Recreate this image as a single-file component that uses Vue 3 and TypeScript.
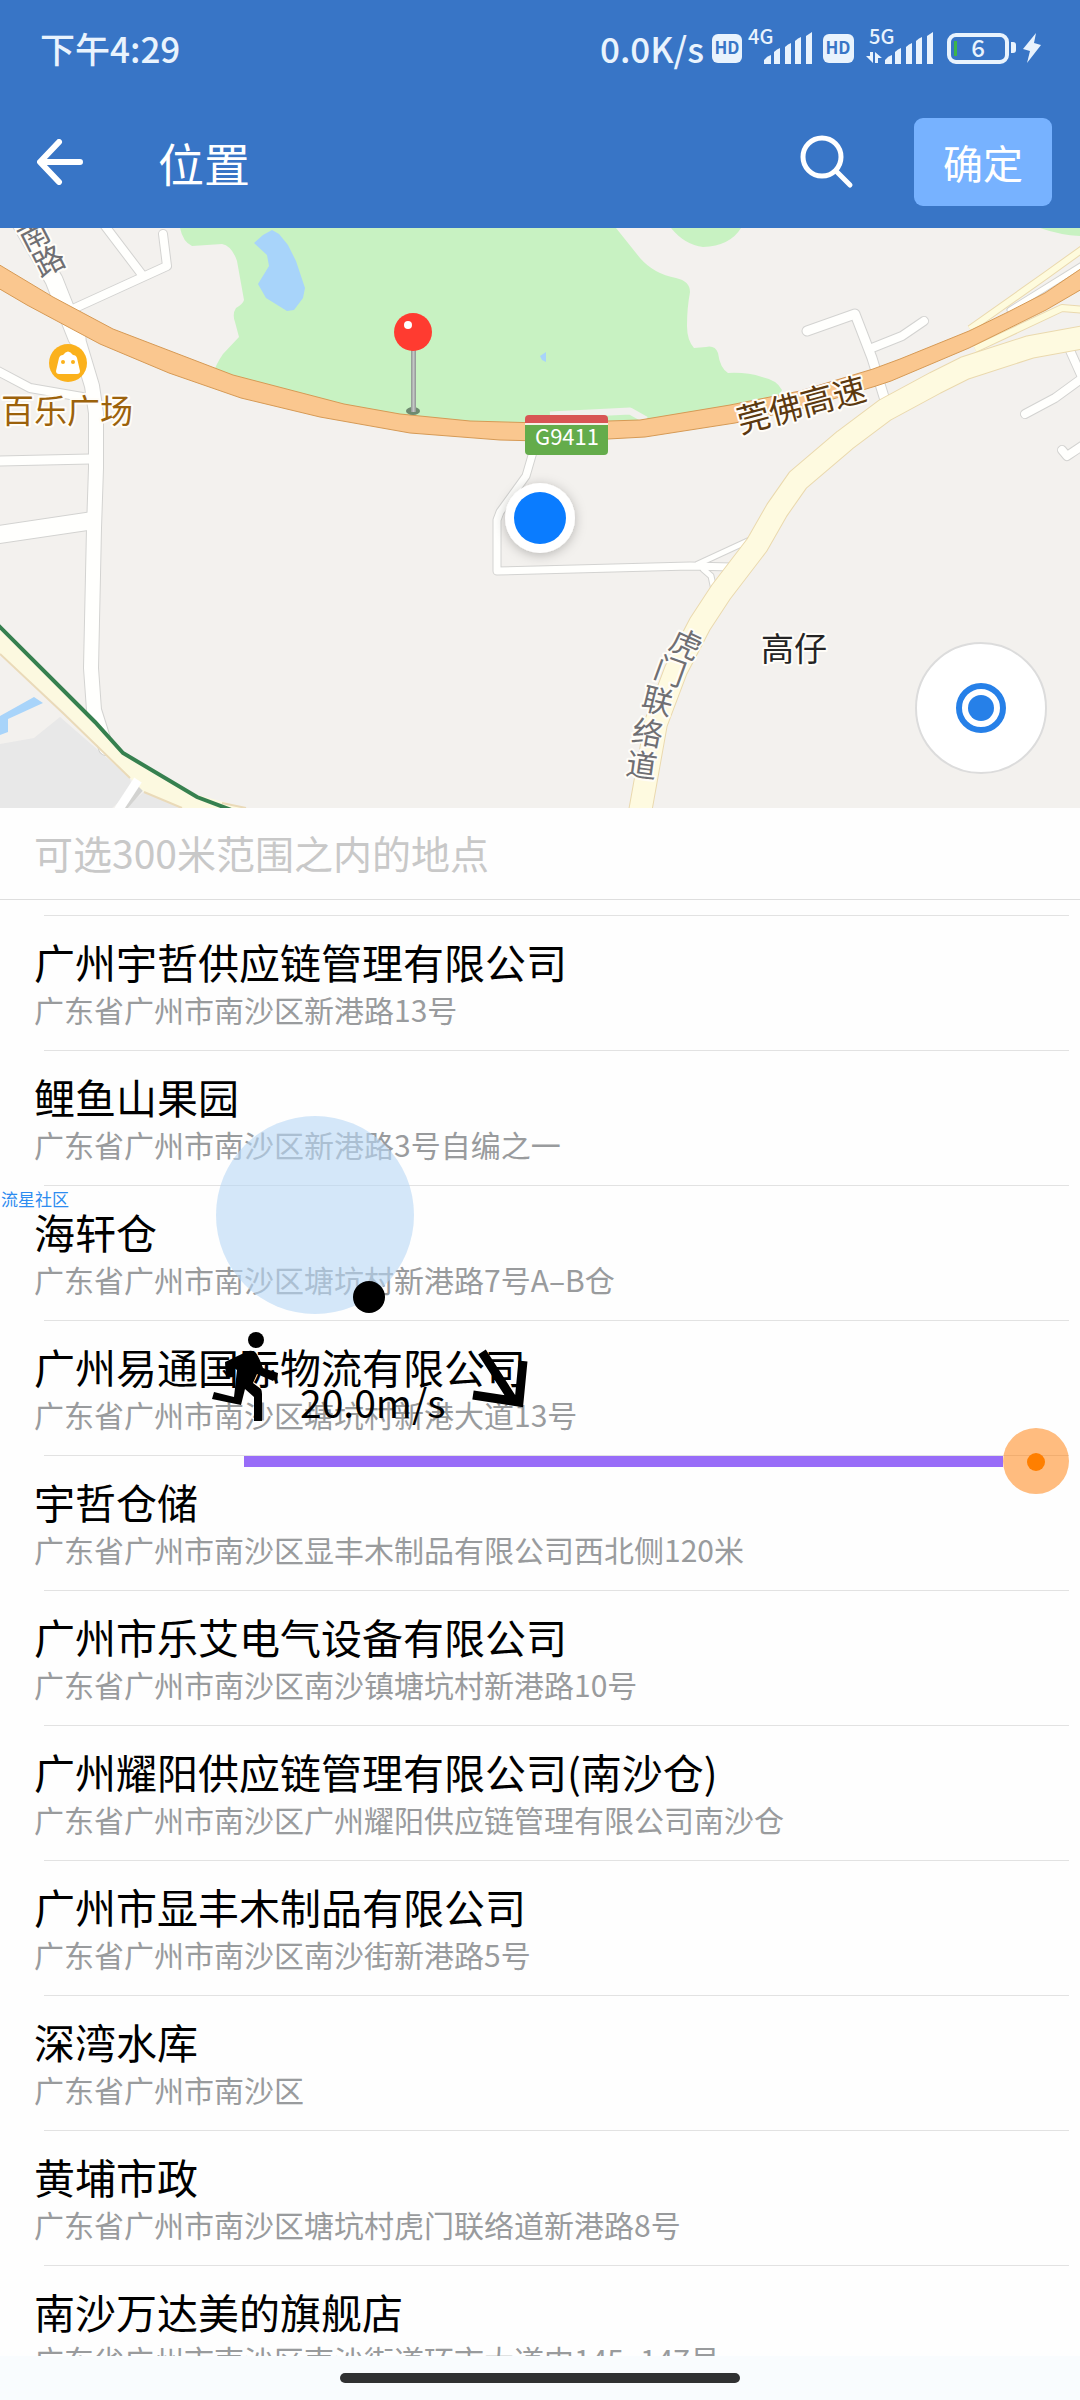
<script setup lang="ts">
interface Place {
  name: string
  address: string
}

interface Glyph {
  char: string
  x: number
  y: number
  turn: number
}

const places: Place[] = [
  { name: '广州宇哲供应链管理有限公司', address: '广东省广州市南沙区新港路13号' },
  { name: '鲤鱼山果园', address: '广东省广州市南沙区新港路3号自编之一' },
  { name: '海轩仓', address: '广东省广州市南沙区塘坑村新港路7号A–B仓' },
  { name: '广州易通国际物流有限公司', address: '广东省广州市南沙区塘坑村新港大道13号' },
  { name: '宇哲仓储', address: '广东省广州市南沙区显丰木制品有限公司西北侧120米' },
  { name: '广州市乐艾电气设备有限公司', address: '广东省广州市南沙区南沙镇塘坑村新港路10号' },
  { name: '广州耀阳供应链管理有限公司(南沙仓)', address: '广东省广州市南沙区广州耀阳供应链管理有限公司南沙仓' },
  { name: '广州市显丰木制品有限公司', address: '广东省广州市南沙区南沙街新港路5号' },
  { name: '深湾水库', address: '广东省广州市南沙区' },
  { name: '黄埔市政', address: '广东省广州市南沙区塘坑村虎门联络道新港路8号' },
  { name: '南沙万达美的旗舰店', address: '广东省广州市南沙区南沙街道环市大道中145–147号' },
]

// Road names that follow the bend of the road, one turned character at a time
const roadGlyphs: Glyph[] = [
  { char: '南', x: 33, y: 5, turn: -27 },
  { char: '路', x: 48, y: 31, turn: -27 },
  { char: '虎', x: 687, y: 414, turn: 25 },
  { char: '门', x: 671, y: 441, turn: 20 },
  { char: '联', x: 658, y: 471, turn: 14 },
  { char: '络', x: 648, y: 503, turn: 11 },
  { char: '道', x: 642, y: 535, turn: 8 },
]

// White lanes on the map, drawn twice: a grey casing and then the surface
const lanes: { d: string; w: number }[] = [
  { d: 'M15 -15 L54 52 L77 110', w: 17 },
  { d: 'M77 108 L92 158 L96 185 L96 240 L94 300 L91 440 L94 482 L106 520', w: 14 },
  { d: 'M-4 142 L30 160 L88 170', w: 8 },
  { d: 'M-4 233 L90 231', w: 9 },
  { d: 'M-4 307 L90 293', w: 17 },
  { d: 'M75 80 L167 38 L163 6', w: 8 },
  { d: 'M102 -6 L143 48', w: 8 },
  { d: 'M533 224 L526 248 L500 284 L497 292 L497 343 L690 338 L732 339', w: 7 },
  { d: 'M698 336 L750 312', w: 5 },
  { d: 'M703 341 L711 348 L714 362', w: 5 },
  { d: 'M807 103 L855 86 L872 130 L888 182', w: 9 },
  { d: 'M872 120 L902 108 L924 93', w: 8 },
  { d: 'M1068 118 L1086 158', w: 8 },
  { d: 'M1025 186 L1055 170 L1088 146', w: 8 },
  { d: 'M1062 222 L1067 228 L1088 214', w: 8 },
  { d: 'M1084 36 L1010 82', w: 5 },
]
</script>

<template>
  <div class="page">
    <header class="top">
      <div class="status">
        <span class="time">下午4:29</span>
        <span class="speed">0.0K/s</span>
        <svg class="status-icons" viewBox="0 0 330 40" width="330" height="40" aria-hidden="true">
          <g fill="#e9f3fd">
            <rect x="0" y="6" width="30" height="29" rx="6" />
            <rect x="111" y="6" width="31" height="29" rx="6" />
            <path d="M52 36v-4q3-4 7-5v9zM62 36v-12q3-3 6-4v16zM73 36v-17q3-3 6-4v21zM83 36v-23q3-3 6-4v27zM94 36v-28q3-2 6-4v32z" />
            <path d="M173 36v-4q3-4 7-5v9zM183 36v-12q3-3 6-4v16zM194 36v-17q3-3 6-4v21zM204 36v-23q3-3 6-4v27zM215 36v-28q3-2 6-4v32z" />
            <path d="M158 24h3v11l-7-7h4zM163 35v-11l7 6h-4v5z" />
            <path d="M299 14h2q3 0 3 3v5q0 3-3 3h-2z" />
            <path d="M324 5L311 21L318 23L315 35L329 17L322 15Z" />
            <text x="36" y="16" class="net">4G</text>
            <text x="157" y="16" class="net">5G</text>
            <text x="266" y="29" text-anchor="middle" class="level">6</text>
          </g>
          <text x="15" y="26" text-anchor="middle" class="hd">HD</text>
          <text x="126" y="26" text-anchor="middle" class="hd">HD</text>
          <rect x="237" y="7" width="58" height="27" rx="7" fill="none" stroke="#e9f3fd" stroke-width="4" />
          <rect x="242" y="13" width="3" height="15" fill="#3bb54a" />
        </svg>
      </div>
      <div class="bar">
        <button class="icon back" aria-label="返回">
          <svg viewBox="0 0 46 46" width="46" height="46">
            <path d="M43 23H4M22 3L3 23l19 20" fill="none" stroke="#fff" stroke-width="6" stroke-linecap="round" stroke-linejoin="round" />
          </svg>
        </button>
        <h1>位置</h1>
        <button class="icon search" aria-label="搜索">
          <svg viewBox="0 0 54 54" width="54" height="54">
            <circle cx="22" cy="22" r="19" fill="none" stroke="#fff" stroke-width="5" />
            <path d="M36 36L50 50" stroke="#fff" stroke-width="5" stroke-linecap="round" />
          </svg>
        </button>
        <button class="confirm">确定</button>
      </div>
    </header>

    <section class="map">
      <svg viewBox="0 0 1080 580" class="map-art" role="img" aria-label="地图">
        <defs>
          <filter id="glow" x="-50%" y="-50%" width="200%" height="200%">
            <feDropShadow dx="0" dy="2" stdDeviation="6" flood-color="#000" flood-opacity="0.25" />
          </filter>
          <linearGradient id="stem" x1="0" x2="1">
            <stop offset="0" stop-color="#8f9492" />
            <stop offset="0.5" stop-color="#c3c6c5" />
            <stop offset="1" stop-color="#8f9492" />
          </linearGradient>
        </defs>
        <rect width="1080" height="580" fill="#f3f1ee" />
        <g fill="#c8f2c2">
          <path d="M180 0 Q183 14 192 18 L222 16 Q232 18 237 33 L244 72 Q243 76 236 80 Q232 86 235 94 L239 109 L223 126 Q216 136 213 146 L340 182 L470 200 L640 196 L775 176 L782 162 Q777 152 762 149 Q747 144 728 145 Q720 140 718 125 Q715 117 706 119 L694 120 Q687 112 687 98 Q687 80 690 64 Q690 53 676 50 Q654 46 640 30 L616 0 Z" />
          <path d="M671 0 Q685 17 703 19 Q730 18 741 0 Z" />
          <path d="M1040 0 Q1060 7 1080 8 V0 Z" />
        </g>
        <g fill="#a8d4fa">
          <path d="M272 2 L263 7 L254 15 L267 27 L269 38 L258 56 L266 70 L287 83 L294 82 L303 70 L305 60 L296 33 L288 17 L279 6 Z" />
          <path d="M540 128 L546 124 V134 L542 132 Z" />
        </g>
        <path d="M0 516 L34 510 L60 489 L130 550 L132 562 L112 580 H0 Z M144 564 L182 580 H124 Z" fill="#e8e8e8" />
        <path d="M0 488 L34 469 L43 475 L8 491 V504 L0 507 Z" fill="#a8d4fa" />
        <g fill="none" stroke-linejoin="round">
          <path d="M550 187 L630 183 L646 192" stroke="#f1f0ed" stroke-width="7" />
          <g stroke="#d3d3d1" stroke-linecap="round">
            <path v-for="lane in lanes" :key="lane.d" :d="lane.d" :stroke-width="lane.w + 2" />
          </g>
          <g stroke="#fffffd" stroke-linecap="round">
            <path v-for="lane in lanes" :key="lane.d" :d="lane.d" :stroke-width="lane.w" />
          </g>
          <path d="M142 556 L116 586" stroke="#d3d3d1" stroke-width="10" />
          <path d="M1084 20 L1045 48 L970 101 M975 121 L1062 80 L1086 82" stroke="#ead9ae" stroke-width="8" />
          <path d="M1084 20 L1045 48 L970 101 M975 121 L1062 80 L1086 82" stroke="#fefbdd" stroke-width="6" />
          <path d="M1090 108 L1030 119 L965 140 L935 155 L885 182 L845 212 L798 252 L777 282 L757 317 L721 364 L700 396 L676 442 L656 495 L639 590" stroke="#ead9ae" stroke-width="24" />
          <path d="M1090 108 L1030 119 L965 140 L935 155 L885 182 L845 212 L798 252 L777 282 L757 317 L721 364 L700 396 L676 442 L656 495 L639 590" stroke="#fefae0" stroke-width="22" />
        </g>
        <path d="M0 398 L93 492 L123 525 L198 567 L246 580 H182 L144 564 L130 550 L64 484 L0 426 Z" fill="#fcf9e0" />
        <path d="M0 426 L64 486 L130 550 M144 564 L182 580 M222 575 L246 580" fill="none" stroke="#eadab8" stroke-width="2" />
        <path d="M138 552 L117 584" stroke="#fff" stroke-width="9" />
        <path d="M-2 397 L95 494 L123 525 L197 569 L234 583" fill="none" stroke="#36804f" stroke-width="4" />
        <path d="M-2 36 L53 69 L113 101 L233 147 L344 176 L400 186 L470 193 L540 195 L608 193 L640 192 L730 177 L800 163 L873 141 L900 131 L969 103 L1008 84 L1045 65 L1082 40 V61 L1046 82 L969 120 L891 153 L876 158 L800 181 L735 195 L645 209 L608 211 L540 213 L500 212 L410 205 L320 189 L241 170 L169 145 L100 116 L27 77 L-2 60 Z" fill="#fac78f" stroke="#d69a55" stroke-width="1" />

        <g class="place-labels">
          <text x="1" y="195" fill="#9c620b">百乐广场</text>
          <text x="761" y="433" fill="#242424">高仔</text>
          <text x="801" y="175" fill="#5c390f" text-anchor="middle" dominant-baseline="central" transform="rotate(-15 801 175)">莞佛高速</text>
        </g>
        <g class="road-labels">
          <text v-for="g in roadGlyphs" :key="g.char" :x="g.x" :y="g.y" :transform="`rotate(${g.turn} ${g.x} ${g.y})`">{{ g.char }}</text>
        </g>

        <circle cx="68" cy="135" r="19" fill="#fbb11c" />
        <path d="M59 130 q1 -3 4 -3 q5 -7 10 0 q3 0 4 3 l3 13 q0 3 -3 3 h-18 q-3 0 -3 -3 Z" fill="#fff" />
        <circle cx="63" cy="134" r="2" fill="#fbb11c" />
        <circle cx="73" cy="134" r="2" fill="#fbb11c" />

        <path d="M525 196 V191 Q525 187 529 187 H604 Q608 187 608 191 V196 Z" fill="#d85554" />
        <rect x="525" y="195" width="83" height="2" fill="#f3f1e6" />
        <path d="M525 197 H608 V223 Q608 227 604 227 H529 Q525 227 525 223 Z" fill="#64ac4b" />
        <text x="567" y="217" text-anchor="middle" class="route">G9411</text>

        <ellipse cx="413" cy="183" rx="7" ry="4" fill="#6f8a70" />
        <rect x="411" y="120" width="5" height="64" fill="url(#stem)" />
        <circle cx="413" cy="104" r="19" fill="#ff3b30" />
        <circle cx="408" cy="97" r="4" fill="#fff" />

        <circle cx="540" cy="290" r="35" fill="#fff" filter="url(#glow)" />
        <circle cx="540" cy="290" r="26" fill="#0a7cff" />
      </svg>
      <button class="locate" aria-label="定位">
        <svg viewBox="0 0 52 52" width="52" height="52">
          <circle cx="26" cy="26" r="22" fill="none" stroke="#2680e8" stroke-width="6" />
          <circle cx="26" cy="26" r="13" fill="#2680e8" />
        </svg>
      </button>
    </section>

    <input class="hint" type="text" placeholder="可选300米范围之内的地点" aria-label="地点" />

    <ul class="places">
      <li v-for="place in places" :key="place.name">
        <strong>{{ place.name }}</strong>
        <span>{{ place.address }}</span>
      </li>
    </ul>

    <footer class="nav"><i></i></footer>

    <span class="tag">流星社区</span>
    <svg class="joystick" viewBox="0 0 320 310" width="320" height="310" aria-hidden="true">
      <circle cx="103" cy="99" r="99" fill="#b7d7f5" fill-opacity="0.6" />
      <circle cx="157" cy="181" r="16" />
      <circle cx="44" cy="224" r="8" />
      <path d="M13 246 L34 236 Q40 233 44 237 Q47 241 51 252 L66 257 L65 266 L62 264 L61 265 L45 258 L41 267 L49 273 Q50 275 50 278 V305 H42 V281 L33 273 L29 289 L0 283 L2 276 L22 281 L25 254 L22 252 L21 261 L14 262 Z" />
      <path d="M270 236 L301 284 M261 279 L307 286 L311 245" fill="none" stroke="#000" stroke-width="9" />
      <text x="88" y="302" class="velocity">20.0m/s</text>
    </svg>
    <div class="track">
      <i></i>
      <button aria-label="拖动">
        <svg viewBox="0 0 66 66" width="66" height="66">
          <circle cx="33" cy="33" r="33" fill="#ff7f0a" fill-opacity="0.52" />
          <circle cx="33" cy="34" r="9" fill="#ff7f00" />
        </svg>
      </button>
    </div>
  </div>
</template>

<style>
body {
  margin: 0;
  background: #fff;
}
</style>

<style scoped>
.page {
  position: relative;
  display: flex;
  flex-direction: column;
  height: 100vh;
  overflow: hidden;
  background: #fefefe;
  color: #000;
  font-family: "Noto Sans CJK SC", "Noto Sans", sans-serif;
}

button {
  padding: 0;
  border: 0;
  background: none;
  font: inherit;
  color: inherit;
  display: flex;
  align-items: center;
  justify-content: center;
}

.top {
  flex: none;
  background: #3875c6;
  color: #fff;
}

.status {
  display: flex;
  align-items: center;
  height: 95px;
  padding: 0 38px 0 40px;
  color: #e9f3fd;
  font-size: 35px;
  font-weight: 500;
}

.speed {
  margin-left: auto;
  margin-right: 8px;
}

.net {
  font-size: 20px;
}

.level {
  font-size: 24px;
}

.hd {
  font-size: 17px;
  font-weight: 700;
  fill: #3875c6;
}

.bar {
  display: flex;
  align-items: center;
  height: 133px;
  padding: 0 28px 0 37px;
}

h1 {
  margin: 0 auto 0 75px;
  font-size: 46px;
  font-weight: 400;
}

.search {
  margin-right: 60px;
}

.confirm {
  width: 138px;
  height: 88px;
  border-radius: 9px;
  background: #77b2ff;
  font-size: 40px;
}

.map {
  position: relative;
  flex: none;
  overflow: hidden;
}

.map-art {
  display: block;
  width: 100%;
  height: auto;
}

.place-labels text,
.road-labels text {
  font-size: 33px;
  stroke: #fffdf8;
  stroke-width: 4px;
  stroke-linejoin: round;
  paint-order: stroke;
}

.road-labels text {
  font-size: 31px;
  fill: #6f6f73;
  text-anchor: middle;
  dominant-baseline: central;
}

.route {
  font-size: 22px;
  fill: #fff;
}

.locate {
  position: absolute;
  right: 33px;
  bottom: 34px;
  width: 132px;
  height: 132px;
  border: 2px solid #dcdcdc;
  border-radius: 50%;
  background: #fff;
}

.hint {
  flex: none;
  box-sizing: border-box;
  width: 100%;
  height: 92px;
  padding: 0 34px 4px;
  border: 0;
  border-bottom: 1px solid #dedede;
  background: none;
  font: inherit;
  font-size: 39px;
}

.hint::placeholder {
  color: #c8c8c8;
  opacity: 1;
}

.places {
  flex: 1;
  min-height: 0;
  overflow: hidden;
  margin: 0;
  padding: 15px 11px 0 34px;
  list-style: none;
}

.places li {
  display: flex;
  flex-direction: column;
  height: 135px;
  box-sizing: border-box;
  padding-top: 21px;
  background: linear-gradient(#e2e2e2, #e2e2e2) right top / calc(100% - 10px) 1px no-repeat;
  white-space: nowrap;
}

.places strong {
  font-size: 41px;
  font-weight: 400;
  line-height: 50px;
}

.places span {
  font-size: 30px;
  line-height: 46px;
  color: #999b9d;
}

.nav {
  flex: none;
  display: flex;
  justify-content: center;
  align-items: center;
  height: 44px;
  background: #f9fcfe;
}

.nav i {
  width: 37%;
  height: 10px;
  border-radius: 5px;
  background: #303132;
}

.tag {
  position: absolute;
  left: 1px;
  top: 1187px;
  font-size: 17px;
  line-height: 24px;
  color: #2d8cf0;
}

.joystick {
  position: absolute;
  left: 212px;
  top: 1116px;
}

.velocity {
  font-size: 39px;
}

.track {
  position: absolute;
  left: 244px;
  right: 11px;
  top: 1428px;
  display: flex;
  align-items: center;
}

.track i {
  flex: 1;
  height: 11px;
  background: #986cf8;
}
</style>
